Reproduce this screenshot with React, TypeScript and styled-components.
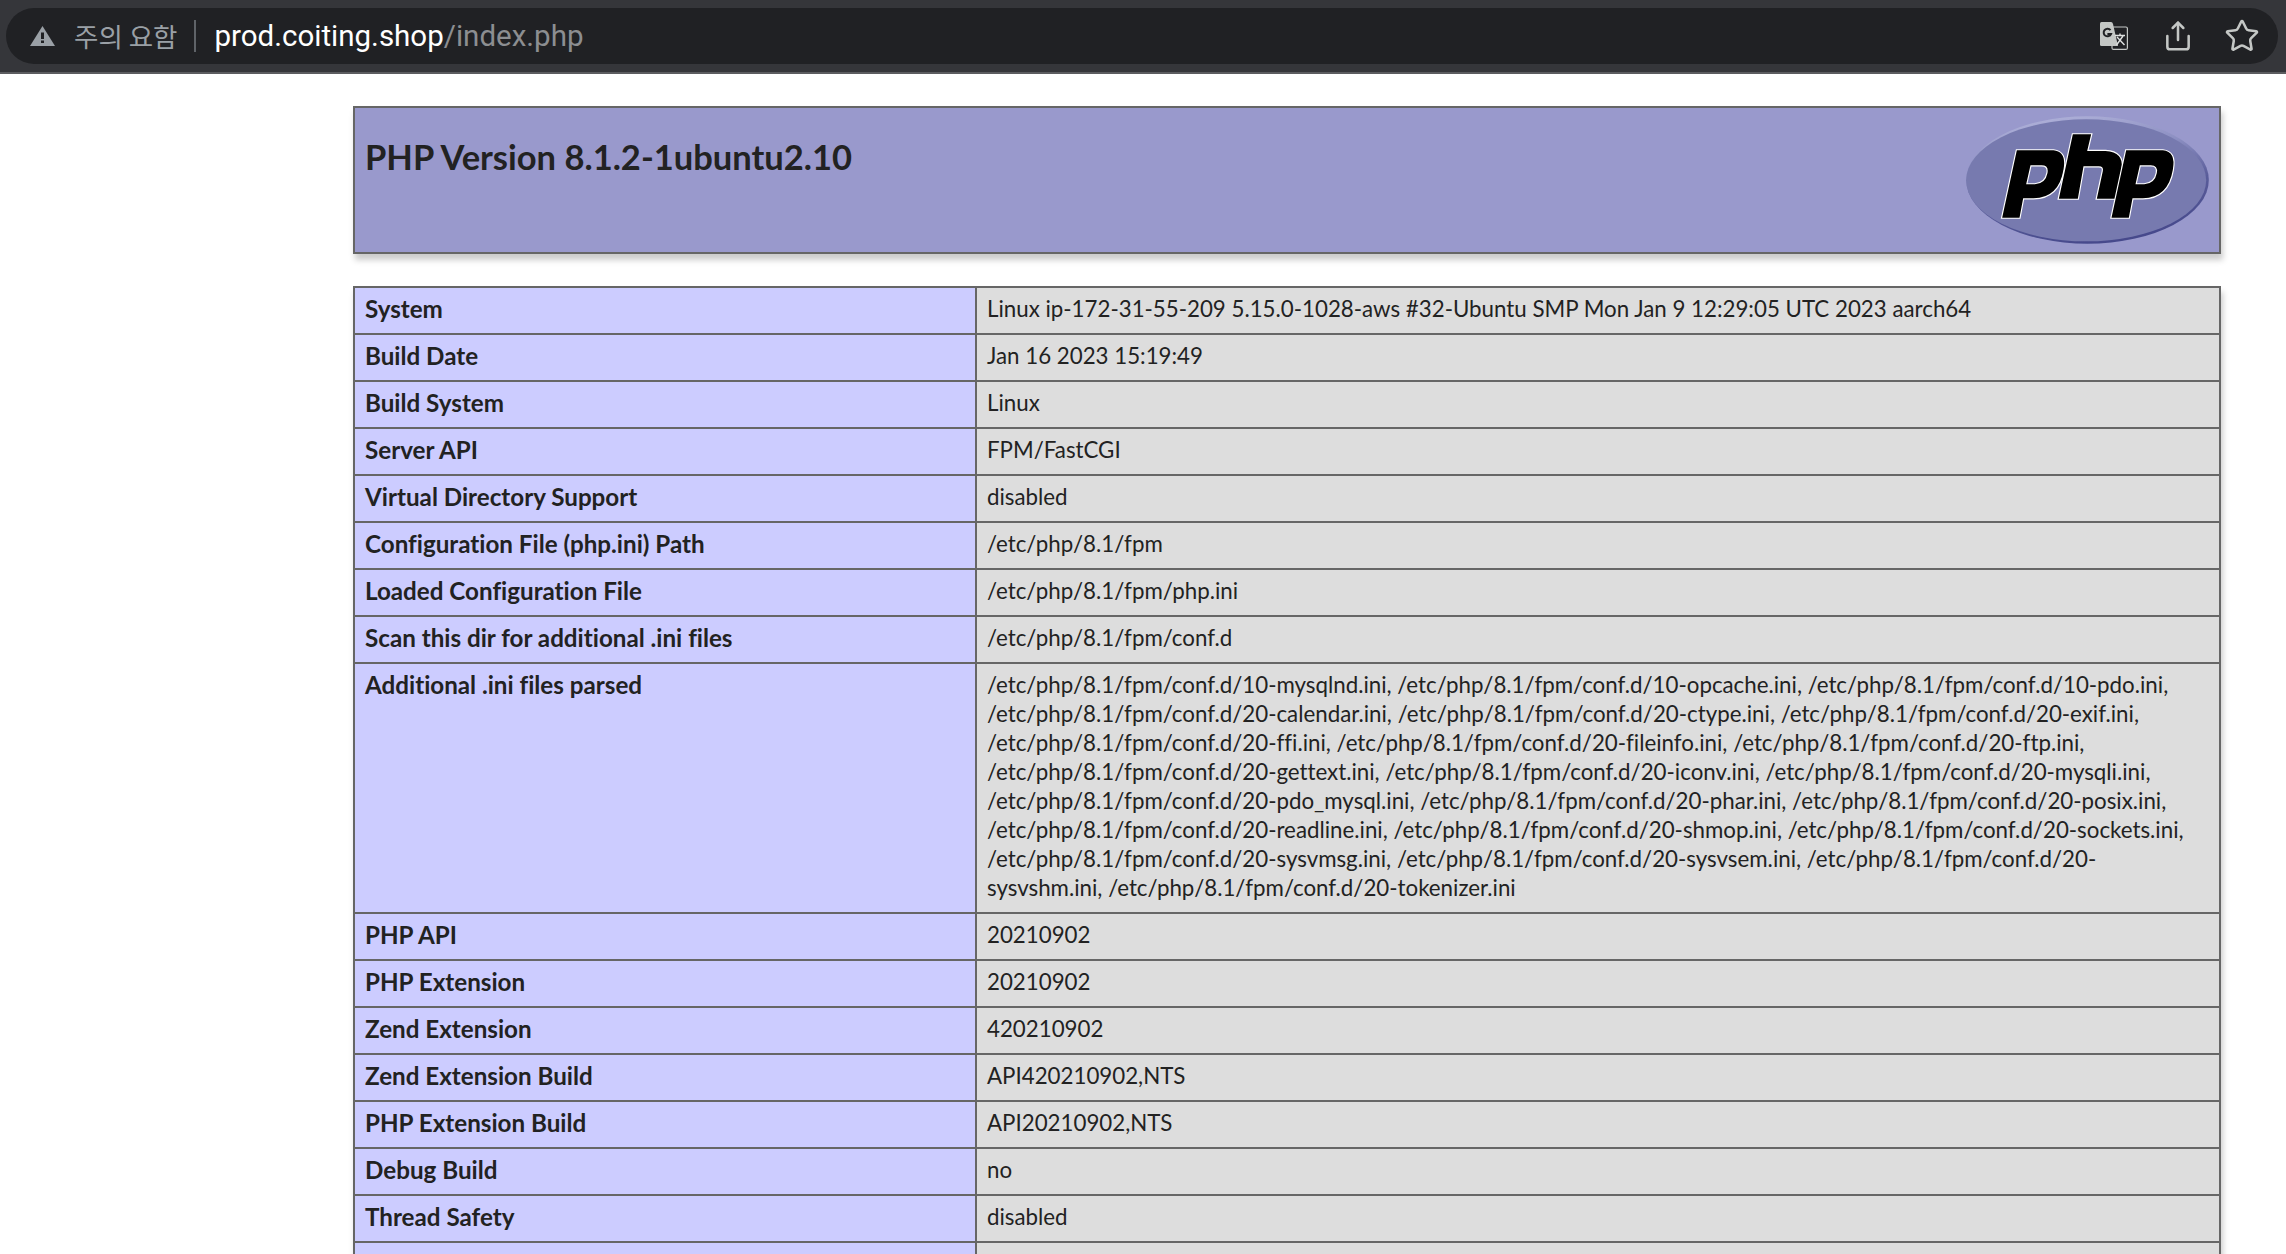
import { FC } from "react";
import styled, { createGlobalStyle } from "styled-components";
import { Share, Star } from "lucide-react";

const GlobalStyle = createGlobalStyle`
    html, body {
        margin: 0;
        padding: 0;
        background: #fff;
        overflow: hidden;
    }
`;

const Page = styled.div`
    height: 1254px;
    overflow: hidden;
    font-family: Lato, "Noto Sans CJK KR", sans-serif;
    font-variant-ligatures: none;
`;

const Toolbar = styled.div`
    height: 74px;
    box-sizing: border-box;
    padding: 8px 8px 0 6px;
    background: #35363a;
    border-bottom: 2px solid #5c5d60;
`;

const Omnibox = styled.div`
    height: 56px;
    display: flex;
    align-items: center;
    padding: 0 18px 0 24px;
    border-radius: 28px;
    background: #202124;
`;

const WarningLabel = styled.span`
    margin-left: 19px;
    padding-right: 17px;
    border-right: 2px solid #5f6368;
    color: #9aa0a6;
    font-family: "Noto Sans CJK KR", sans-serif;
    font-size: 26.5px;
    line-height: 32px;
`;

const Url = styled.span`
    margin-left: 18px;
    flex: 1;
    color: #fff;
    font-family: Roboto, sans-serif;
    font-size: 29.5px;
`;

const UrlPath = styled.span`
    color: #8c8e91;
`;

const IconGroup = styled.div`
    display: flex;
    align-items: center;
    gap: 30px;
    color: #c4c7c5;
`;

const TranslateSvg = styled.svg`
    margin-right: 4px;
`;

const Content = styled.div`
    width: 1868px;
    margin: 32px 0 0 353px;
`;

const Header = styled.div`
    height: 148px;
    box-sizing: border-box;
    margin-bottom: 32px;
    padding: 8px 10px;
    display: flex;
    justify-content: space-between;
    background: #9999cc;
    border: 2px solid #666;
    box-shadow: 2px 6px 6px #ccc;
`;

const Title = styled.h1`
    margin: 19px 0 0;
    color: #222;
    font-size: 34.5px;
    line-height: 44px;
    font-weight: 700;
`;

const InfoTable = styled.table`
    width: 100%;
    border-collapse: collapse;
    table-layout: fixed;
    box-shadow: 2px 6px 6px #ccc;
`;

const KeyCell = styled.td`
    width: 622px;
    box-sizing: border-box;
    padding: 6px 10px 10px;
    background: #ccccff;
    border: 2px solid #666;
    color: #222;
    font-size: 24.2px;
    line-height: 29px;
    font-weight: 700;
    vertical-align: top;
`;

const ValueCell = styled.td`
    padding: 6px 24px 10px 10px;
    background: #dddddd;
    border: 2px solid #666;
    color: #222;
    font-size: 22.3px;
    line-height: 29px;
    vertical-align: top;
    overflow-wrap: break-word;
`;

const rows: [string, string][] = [
    ["System", "Linux ip-172-31-55-209 5.15.0-1028-aws #32-Ubuntu SMP Mon Jan 9 12:29:05 UTC 2023 aarch64"],
    ["Build Date", "Jan 16 2023 15:19:49"],
    ["Build System", "Linux"],
    ["Server API", "FPM/FastCGI"],
    ["Virtual Directory Support", "disabled"],
    ["Configuration File (php.ini) Path", "/etc/php/8.1/fpm"],
    ["Loaded Configuration File", "/etc/php/8.1/fpm/php.ini"],
    ["Scan this dir for additional .ini files", "/etc/php/8.1/fpm/conf.d"],
    ["Additional .ini files parsed", "/etc/php/8.1/fpm/conf.d/10-mysqlnd.ini, /etc/php/8.1/fpm/conf.d/10-opcache.ini, /etc/php/8.1/fpm/conf.d/10-pdo.ini, /etc/php/8.1/fpm/conf.d/20-calendar.ini, /etc/php/8.1/fpm/conf.d/20-ctype.ini, /etc/php/8.1/fpm/conf.d/20-exif.ini, /etc/php/8.1/fpm/conf.d/20-ffi.ini, /etc/php/8.1/fpm/conf.d/20-fileinfo.ini, /etc/php/8.1/fpm/conf.d/20-ftp.ini, /etc/php/8.1/fpm/conf.d/20-gettext.ini, /etc/php/8.1/fpm/conf.d/20-iconv.ini, /etc/php/8.1/fpm/conf.d/20-mysqli.ini, /etc/php/8.1/fpm/conf.d/20-pdo_mysql.ini, /etc/php/8.1/fpm/conf.d/20-phar.ini, /etc/php/8.1/fpm/conf.d/20-posix.ini, /etc/php/8.1/fpm/conf.d/20-readline.ini, /etc/php/8.1/fpm/conf.d/20-shmop.ini, /etc/php/8.1/fpm/conf.d/20-sockets.ini, /etc/php/8.1/fpm/conf.d/20-sysvmsg.ini, /etc/php/8.1/fpm/conf.d/20-sysvsem.ini, /etc/php/8.1/fpm/conf.d/20-sysvshm.ini, /etc/php/8.1/fpm/conf.d/20-tokenizer.ini"],
    ["PHP API", "20210902"],
    ["PHP Extension", "20210902"],
    ["Zend Extension", "420210902"],
    ["Zend Extension Build", "API420210902,NTS"],
    ["PHP Extension Build", "API20210902,NTS"],
    ["Debug Build", "no"],
    ["Thread Safety", "disabled"],
    ["Zend Signal Handling", "enabled"],
];

const WarningIcon: FC = () => (
    <svg width="25" height="20" viewBox="0 0 25 20">
        <path d="M12.5 0 L25 20 H0 Z M11 6.5 V13 H14 V6.5 Z M11 14.5 V17 H14 V14.5 Z" fill="#9aa0a6" fillRule="evenodd" />
    </svg>
);

const TranslateIcon: FC = () => (
    <TranslateSvg width="28" height="28" viewBox="0 0 28 28">
        <rect x="12" y="5" width="15.4" height="22.4" rx="1.5" fill="#202124" stroke="#c4c7c5" strokeWidth="1.2" />
        <path d="M1.5 0 H11 Q12.5 0 13 2 L18 24 H1.5 Q0 24 0 22.5 V1.5 Q0 0 1.5 0 Z" fill="#c4c7c5" />
        <path d="M10.5 8.2 A3.8 3.8 0 1 0 11 12 H7.4" fill="none" stroke="#202124" strokeWidth="2" />
        <path d="M15 13.5 H25 M20 11.5 V13.5 M16.5 23 L23 14 M17 15 L24.5 23" stroke="#dfe1e0" strokeWidth="1.4" fill="none" />
    </TranslateSvg>
);

const bowl = "M128 322 L172 120 H282 Q322 124 312 178 Q298 262 222 264 H191 L180 322 Z M213 165 L200 222 H226 Q258 220 264 188 Q268 165 246 165 Z";
const arch = "M340 72 H395 L383 122 H438 Q494 125 486 175 L468 265 H412 L430 182 Q433 168 418 168 H372 L355 265 H298 Z";

const PhpLogo: FC = () => (
    <svg width="243" height="128" viewBox="20 17 728 384">
        <defs>
            <linearGradient id="logoEdge" x1="0.35" y1="0" x2="0.65" y2="1">
                <stop offset="0" stopColor="#aeb0d8" />
                <stop offset="0.3" stopColor="#8c8fc2" />
                <stop offset="0.6" stopColor="#5a5d9a" />
                <stop offset="1" stopColor="#44478a" />
            </linearGradient>
            <filter id="logoSoft" x="-5%" y="-5%" width="110%" height="110%">
                <feGaussianBlur stdDeviation="1.8" />
            </filter>
        </defs>
        <g filter="url(#logoSoft)">
            <ellipse cx="384" cy="209" rx="364" ry="191" fill="url(#logoEdge)" />
            <ellipse cx="380" cy="210" rx="360" ry="183" fill="#777aaf" />
            <g fill="#000" stroke="#fff" strokeWidth="7" fillRule="evenodd" paintOrder="stroke">
                <path d={bowl} />
                <path d={arch} />
                <path d={bowl} transform="translate(328 0)" />
            </g>
        </g>
    </svg>
);

const App: FC = () => (
    <Page>
        <GlobalStyle />
        <Toolbar>
            <Omnibox>
                <WarningIcon />
                <WarningLabel>주의 요함</WarningLabel>
                <Url>prod.coiting.shop<UrlPath>/index.php</UrlPath></Url>
                <IconGroup>
                    <TranslateIcon />
                    <Share size={32} strokeWidth={1.9} />
                    <Star size={36} strokeWidth={1.7} />
                </IconGroup>
            </Omnibox>
        </Toolbar>
        <Content>
            <Header>
                <Title>PHP Version 8.1.2-1ubuntu2.10</Title>
                <PhpLogo />
            </Header>
            <InfoTable>
                <tbody>
                    {rows.map(([key, value]) => (
                        <tr key={key}>
                            <KeyCell>{key}</KeyCell>
                            <ValueCell>{value}</ValueCell>
                        </tr>
                    ))}
                </tbody>
            </InfoTable>
        </Content>
    </Page>
);

export default App;
